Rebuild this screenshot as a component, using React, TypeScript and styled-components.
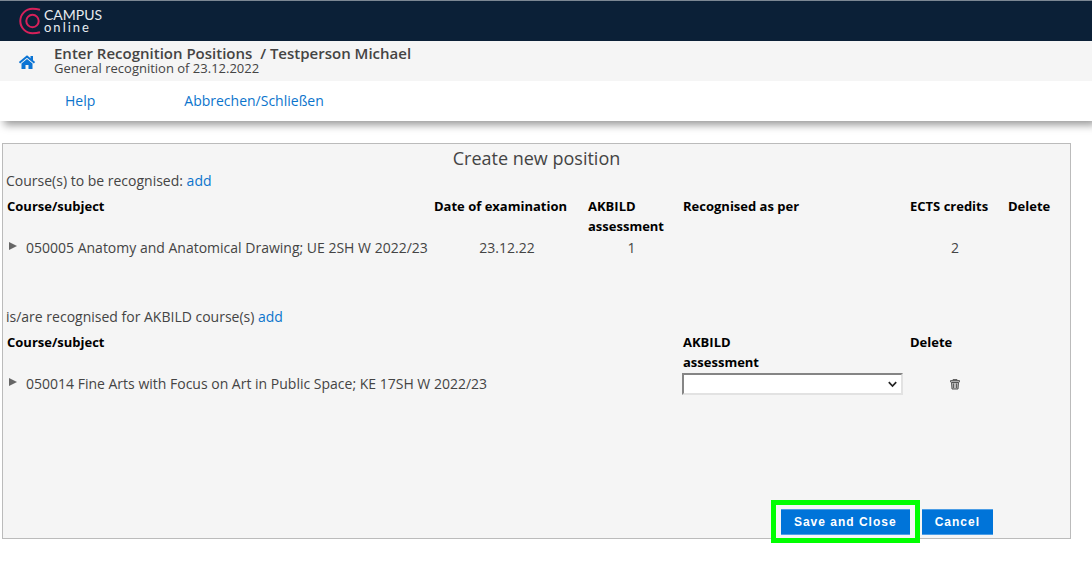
import React from "react";
import styled, { createGlobalStyle } from "styled-components";

const GlobalStyle = createGlobalStyle`
  * { box-sizing: border-box; }
  body {
    margin: 0;
    background: #fff;
    color: #444;
    font: 14px/20px "Open Sans", "Noto Sans", sans-serif;
  }
`;

const Page = styled.div`
  min-height: 100vh;
`;

const TopBar = styled.header`
  display: flex;
  align-items: center;
  gap: 1px;
  height: 41px;
  padding: 0 18px;
  border-top: 1px solid #7c8793;
  background: #0b2037;
`;

const Logo = styled.svg`
  width: 25px;
  height: 28px;
`;

const Brand = styled.div`
  color: #e8ecf0;
  font: 14px/12px Lato, "Open Sans", sans-serif;
`;

const BrandSub = styled.div`
  font-size: 13px;
  letter-spacing: 2px;
`;

const TitleBar = styled.div`
  position: relative;
  z-index: 1;
  display: flex;
  align-items: center;
  gap: 18px;
  height: 40px;
  padding: 0 18px;
  background: #f5f5f5;
`;

const HomeLink = styled.a`
  display: flex;
  padding-top: 2px;
  svg {
    width: 18px;
    height: 14px;
  }
`;

const Heading = styled.div`
  padding-bottom: 2px;
`;

const Title = styled.h1`
  margin: 0;
  font-size: 15px;
  font-weight: 600;
  line-height: 16px;
  white-space: pre;
`;

const Subtitle = styled.div`
  font-size: 13px;
  line-height: 14px;
`;

const Menu = styled.nav`
  display: flex;
  align-items: center;
  gap: 89px;
  height: 40px;
  padding: 0 65px;
  background: #fff;
  box-shadow: 4px 4px 8px rgba(0, 0, 0, 0.4);
`;

const Link = styled.a`
  color: #0b74cc;
  text-decoration: none;
`;

const Panel = styled.form`
  margin: 22px 21px 0 2px;
  border: 1px solid #bbb;
  background: #f5f5f5;
`;

const PanelTitle = styled.h2`
  margin: 0;
  padding: 2px 0 1px;
  font-size: 18px;
  font-weight: 400;
  line-height: 24px;
  text-align: center;
`;

const Section = styled.section`
  padding-left: 3px;
  margin-bottom: 47px;
`;

const SectionLabel = styled.p`
  margin: 0 0 5px;
`;

const Table = styled.table`
  width: 100%;
  table-layout: fixed;
  border-collapse: collapse;
`;

const Col = styled.col<{ $w?: number }>`
  width: ${(p) => (p.$w ? `${p.$w}px` : "auto")};
`;

const Head = styled.th`
  padding: 0 7px 0 1px;
  color: #000;
  font-size: 13px;
  font-weight: 700;
  text-align: left;
  vertical-align: top;
`;

const Cell = styled.td<{ $center?: boolean }>`
  height: 24px;
  padding: 0 6px 0 0;
  text-align: ${(p) => (p.$center ? "center" : "left")};
  vertical-align: middle;
  white-space: nowrap;
`;

const Course = styled.div`
  display: flex;
  align-items: flex-start;
  gap: 9px;
  padding-left: 3px;
`;

const IconButton = styled.button`
  display: flex;
  padding: 4px 0 0;
  border: 0;
  background: none;
  svg {
    width: 8px;
    height: 8px;
  }
`;

const TrashButton = styled(IconButton)`
  margin: 0 auto;
  padding: 0;
  svg {
    width: 10px;
    height: 11px;
  }
`;

const SelectBox = styled.div`
  position: relative;
  svg {
    position: absolute;
    top: 8px;
    right: 6px;
    width: 9px;
    height: 7px;
    pointer-events: none;
  }
`;

const Select = styled.select`
  display: block;
  width: 100%;
  height: 22px;
  border: 2px solid;
  border-color: #858585 #e2e2e2 #e2e2e2 #858585;
  border-radius: 0;
  background: #fff;
  appearance: none;
`;

const Actions = styled.div`
  display: flex;
  align-items: flex-start;
  justify-content: flex-end;
  gap: 12px;
  margin-top: 113px;
  padding: 0 77px 3px 0;
`;

const Highlight = styled.div`
  position: relative;
  &::after {
    content: "";
    position: absolute;
    inset: -9px -10px -8px -10px;
    border: 5px solid #00ff00;
    pointer-events: none;
  }
`;

const Button = styled.button`
  display: block;
  height: 26px;
  padding: 0 13px;
  border: 0;
  border-top: 1px solid #4c9ee6;
  border-bottom: 1px solid #4c9ee6;
  background: #0074d9;
  color: #fff;
  font: 700 12px/16px "Liberation Sans", Arial, sans-serif;
  letter-spacing: 1px;
`;

const Disclosure = () => (
  <IconButton type="button" aria-label="Show details">
    <svg viewBox="0 0 8 8" aria-hidden="true">
      <path d="M0 0 8 4 0 8Z" fill="#666" />
    </svg>
  </IconButton>
);

export default function App() {
  return (
    <Page>
      <GlobalStyle />
      <TopBar>
        <Logo viewBox="0 0 25 28" fill="none" stroke="#d6215a" strokeWidth="2" aria-hidden="true">
          <path d="M22 2.8Q18.500 1.800 14.500 1.800A12.200 12.200 0 0 0 14.500 26.200Q18.500 26.200 22 25.200" />
          <circle cx="14.500" cy="14" r="6.200" />
        </Logo>
        <Brand>
          CAMPUS
          <BrandSub>online</BrandSub>
        </Brand>
      </TopBar>
      <TitleBar>
        <HomeLink href="#" aria-label="Home">
          <svg viewBox="0 0 18 14" aria-hidden="true">
            <path d="M1.5 7.8 9 1.5l7.500 6.300" fill="none" stroke="#0b74d4" strokeWidth="2" />
            <path d="M12.500 1h2.500v5l-2.500-2Z" fill="#0b74d4" />
            <path d="M3.500 8.500 9 4l5.500 4.500V14h-4v-4h-3v4h-4Z" fill="#0b74d4" />
          </svg>
        </HomeLink>
        <Heading>
          <Title>{"Enter Recognition Positions  / Testperson Michael"}</Title>
          <Subtitle>General recognition of 23.12.2022</Subtitle>
        </Heading>
      </TitleBar>
      <Menu>
        <Link href="#">Help</Link>
        <Link href="#">Abbrechen/Schließen</Link>
      </Menu>
      <Panel>
        <PanelTitle>Create new position</PanelTitle>
        <Section>
          <SectionLabel>
            Course(s) to be recognised: <Link href="#">add</Link>
          </SectionLabel>
          <Table>
            <colgroup>
              <Col />
              <Col $w={154} />
              <Col $w={95} />
              <Col $w={227} />
              <Col $w={98} />
              <Col $w={63} />
            </colgroup>
            <thead>
              <tr>
                <Head>Course/subject</Head>
                <Head>Date of examination</Head>
                <Head>AKBILD assessment</Head>
                <Head>Recognised as per</Head>
                <Head>ECTS credits</Head>
                <Head>Delete</Head>
              </tr>
            </thead>
            <tbody>
              <tr>
                <Cell>
                  <Course>
                    <Disclosure />
                    050005 Anatomy and Anatomical Drawing; UE 2SH W 2022/23
                  </Course>
                </Cell>
                <Cell $center>23.12.22</Cell>
                <Cell $center>1</Cell>
                <Cell />
                <Cell $center>2</Cell>
                <Cell />
              </tr>
            </tbody>
          </Table>
        </Section>
        <Section>
          <SectionLabel>
            is/are recognised for AKBILD course(s) <Link href="#">add</Link>
          </SectionLabel>
          <Table>
            <colgroup>
              <Col />
              <Col $w={227} />
              <Col $w={98} />
              <Col $w={63} />
            </colgroup>
            <thead>
              <tr>
                <Head>Course/subject</Head>
                <Head>
                  <label htmlFor="assessment">
                    AKBILD
                    <br />
                    assessment
                  </label>
                </Head>
                <Head>Delete</Head>
                <Head />
              </tr>
            </thead>
            <tbody>
              <tr>
                <Cell>
                  <Course>
                    <Disclosure />
                    050014 Fine Arts with Focus on Art in Public Space; KE 17SH W 2022/23
                  </Course>
                </Cell>
                <Cell>
                  <SelectBox>
                    <Select id="assessment" />
                    <svg viewBox="0 0 9 7" aria-hidden="true">
                      <path d="m.8 1.200 3.700 3.800 3.700-3.800" fill="none" stroke="#222" strokeWidth="1.700" />
                    </svg>
                  </SelectBox>
                </Cell>
                <Cell $center>
                  <TrashButton type="button" aria-label="Delete">
                    <svg viewBox="0 0 10 11" fill="none" stroke="#555" aria-hidden="true">
                      <path d="M1.500 3.500h7L8 10H2Z" fill="#bbb" />
                      <path d="M3 1.500V.5h4v1M.5 3V1.500h9V3ZM3.500 4.500V9M6.500 4.500V9" strokeWidth=".9" />
                    </svg>
                  </TrashButton>
                </Cell>
                <Cell />
              </tr>
            </tbody>
          </Table>
        </Section>
        <Actions>
          <Highlight>
            <Button type="button">Save and Close</Button>
          </Highlight>
          <Button type="button">Cancel</Button>
        </Actions>
      </Panel>
    </Page>
  );
}
